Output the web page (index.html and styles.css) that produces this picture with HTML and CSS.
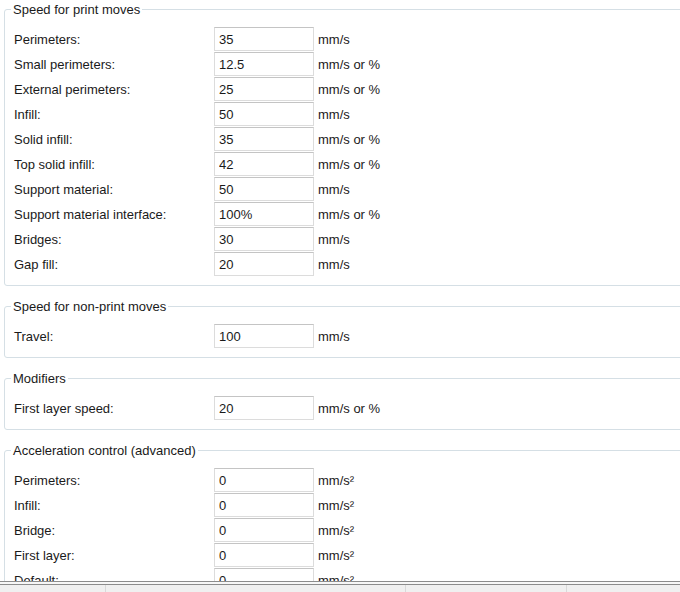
FILE: index.html
```html
<!DOCTYPE html>
<html>
<head>
<meta charset="utf-8">
<link rel="stylesheet" href="styles.css">
</head>
<body>
<div class="page">
  <div class="content">
    <fieldset class="group">
      <legend>Speed for print moves</legend>
      <div class="rows">
        <label>Perimeters:</label><input class="field" value="35"><span class="unit">mm/s</span>
        <label>Small perimeters:</label><input class="field" value="12.5"><span class="unit">mm/s or %</span>
        <label>External perimeters:</label><input class="field" value="25"><span class="unit">mm/s or %</span>
        <label>Infill:</label><input class="field" value="50"><span class="unit">mm/s</span>
        <label>Solid infill:</label><input class="field" value="35"><span class="unit">mm/s or %</span>
        <label>Top solid infill:</label><input class="field" value="42"><span class="unit">mm/s or %</span>
        <label>Support material:</label><input class="field" value="50"><span class="unit">mm/s</span>
        <label>Support material interface:</label><input class="field" value="100%"><span class="unit">mm/s or %</span>
        <label>Bridges:</label><input class="field" value="30"><span class="unit">mm/s</span>
        <label>Gap fill:</label><input class="field" value="20"><span class="unit">mm/s</span>
      </div>
    </fieldset>
    <fieldset class="group">
      <legend>Speed for non-print moves</legend>
      <div class="rows">
        <label>Travel:</label><input class="field" value="100"><span class="unit">mm/s</span>
      </div>
    </fieldset>
    <fieldset class="group">
      <legend>Modifiers</legend>
      <div class="rows">
        <label>First layer speed:</label><input class="field" value="20"><span class="unit">mm/s or %</span>
      </div>
    </fieldset>
    <fieldset class="group">
      <legend>Acceleration control (advanced)</legend>
      <div class="rows">
        <label>Perimeters:</label><input class="field" value="0"><span class="unit">mm/s²</span>
        <label>Infill:</label><input class="field" value="0"><span class="unit">mm/s²</span>
        <label>Bridge:</label><input class="field" value="0"><span class="unit">mm/s²</span>
        <label>First layer:</label><input class="field" value="0"><span class="unit">mm/s²</span>
        <label>Default:</label><input class="field" value="0"><span class="unit">mm/s²</span>
      </div>
    </fieldset>
  </div>
  <div class="statusbar">
    <div class="cell c1"></div>
    <div class="cell c2"></div>
    <div class="cell c3"></div>
    <div class="cell c4"></div>
  </div>
</div>
</body>
</html>
```
FILE: styles.css
```css
html, body {
  margin: 0;
  padding: 0;
  background: #ffffff;
  overflow: hidden;
}
body {
  font-family: "Liberation Sans", Arial, sans-serif;
  font-size: 13px;
  color: #1a1a1a;
}
.page {
  width: 680px;
  height: 592px;
  display: flex;
  flex-direction: column;
  overflow: hidden;
}
.content {
  height: 581px;
  overflow: hidden;
  padding-top: 2px;
  box-sizing: border-box;
}
.group {
  margin: 0 -20px 13px 4px;
  padding: 10px 0 8px 9px;
  border: 1px solid #d5dfe5;
  border-radius: 3px;
  min-width: 0;
}
.group legend {
  margin-left: -3px;
  padding: 0 2px;
  line-height: 15px;
  font-size: 13px;
  color: #1a1a1a;
}
.rows {
  display: grid;
  grid-template-columns: 200px 100px auto;
  grid-auto-rows: 25px;
  align-items: center;
}
.rows label {
  line-height: 25px;
}
.field {
  box-sizing: border-box;
  width: 100px;
  height: 24px;
  margin: 0 0 1px 0;
  align-self: start;
  padding: 0 4px;
  border: 1px solid #dcdcdc;
  border-top-color: #c4c4c4;
  font-family: "Liberation Sans", Arial, sans-serif;
  font-size: 13px;
  color: #1a1a1a;
  background: #fff;
  outline: none;
}
.unit {
  padding-left: 4px;
  line-height: 25px;
}
.statusbar {
  flex: 1;
  display: flex;
  border-top: 1px solid #8c8c8c;
  background: #f0f0f0;
  position: relative;
}
.statusbar::before {
  content: "";
  position: absolute;
  left: 0;
  right: 0;
  top: 2px;
  height: 1px;
  background: #8c8c8c;
}
.statusbar::after {
  content: "";
  position: absolute;
  left: 0;
  right: 0;
  top: 0;
  height: 2px;
  background: #f7f7f7;
}
.cell {
  border-right: 1px solid #d9d9d9;
}
.c1 { width: 105px; }
.c2 { width: 299px; }
.c3 { width: 160px; }
.c4 { flex: 1; border-right: none; }
```
